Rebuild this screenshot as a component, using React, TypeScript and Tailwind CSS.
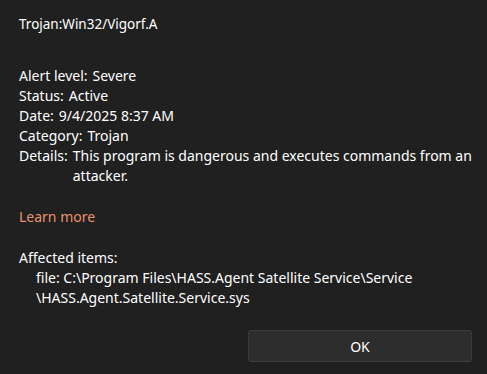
import React from "react";

const Row = ({ label, value }: { label: string; value: string }) => (
  <div className="flex">
    <span className="shrink-0 mr-[5px]">{label}</span>
    <span>{value}</span>
  </div>
);

export default function App() {
  return (
    <div
      className="w-[487px] h-[374px] bg-[#202020] text-white overflow-hidden flex flex-col"
      style={{ fontFamily: '"Noto Sans", "Open Sans", sans-serif' }}
    >
      <div className="pl-[19px] pr-[6px] text-[14px] leading-[20px]">
        <div className="mt-[14px] text-[13.5px]">Trojan:Win32/Vigorf.A</div>
        <div className="mt-[32px] flex flex-col">
          <Row label="Alert level:" value="Severe" />
          <Row label="Status:" value="Active" />
          <Row label="Date:" value="9/4/2025 8:37 AM" />
          <Row label="Category:" value="Trojan" />
          <Row
            label="Details:"
            value="This program is dangerous and executes commands from an attacker."
          />
        </div>
        <div className="mt-[21px] text-[#e9936c]">Learn more</div>
        <div className="mt-[21px]">Affected items:</div>
        <div className="pl-[17px]">
          <div>file: C:\Program Files\HASS.Agent Satellite Service\Service</div>
          <div>\HASS.Agent.Satellite.Service.sys</div>
        </div>
      </div>
      <div className="flex justify-end pr-[15px] mt-auto mb-[12px]">
        <button className="w-[224px] h-[32px] bg-[#2d2d2d] border border-[#3c3c3c] rounded-[3px] text-[14px] text-white">
          OK
        </button>
      </div>
    </div>
  );
}
